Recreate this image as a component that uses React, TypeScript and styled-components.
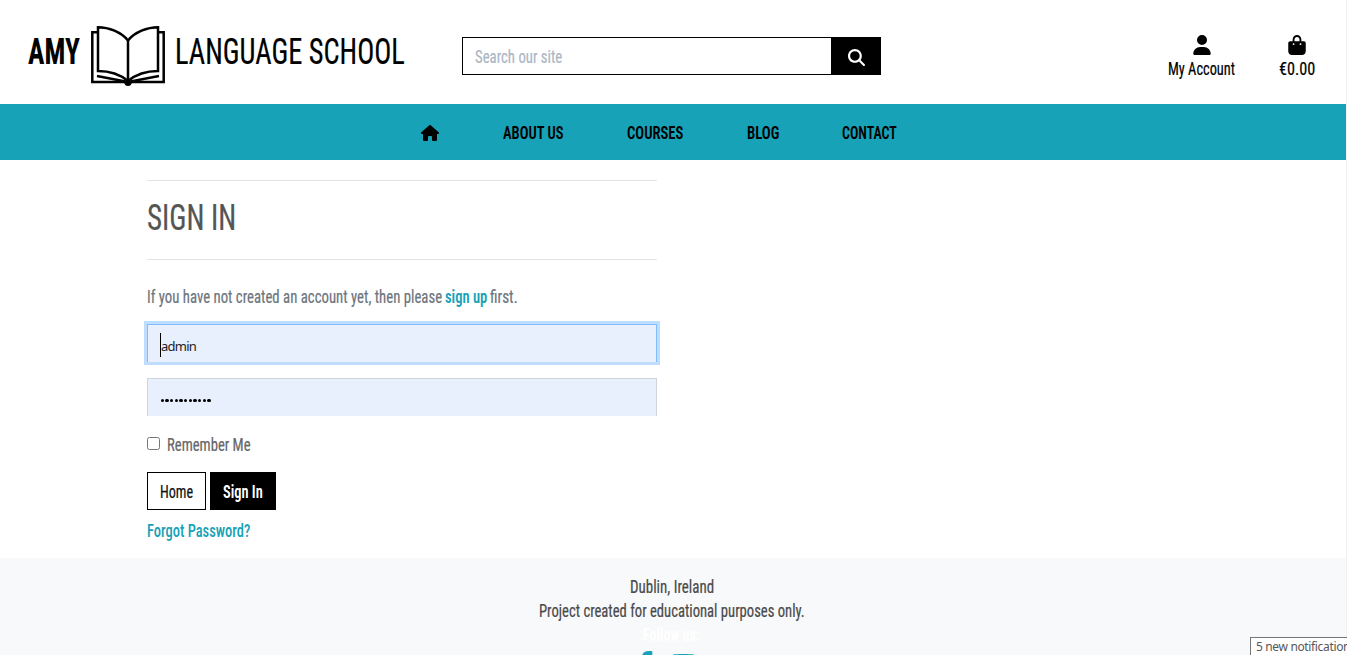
import React, { useLayoutEffect, useRef, useState } from "react";
import styled, { createGlobalStyle } from "styled-components";
import { FaUser, FaBagShopping, FaHouse, FaMagnifyingGlass, FaFacebookF, FaYoutube } from "react-icons/fa6";

const teal = "#17a2b8";

const GlobalStyle = createGlobalStyle`
  *, *::before, *::after { box-sizing: border-box; }
  html, body { margin: 0; padding: 0; overflow: hidden; background: #fff; }
  body { font-family: Roboto, "Liberation Sans", sans-serif; font-size: 18px; line-height: 24px; color: #555; }
  a { color: inherit; text-decoration: none; }
`;

/* Condensed lettering: text is squeezed horizontally to the given width. */
const TextBox = styled.span<{ $w: number; $size: number; $weight: number; $color?: string }>`
  display: inline-block;
  vertical-align: top;
  width: ${(p) => p.$w}px;
  height: ${(p) => (p.$size > 20 ? 48 : 24)}px;
  line-height: ${(p) => (p.$size > 20 ? 48 : 24)}px;
  font-size: ${(p) => p.$size}px;
  font-weight: ${(p) => p.$weight};
  font-stretch: 75%;
  -webkit-text-stroke: ${(p) => (p.$weight < 500 ? 0.2 : 0)}px currentColor;
  white-space: nowrap;
  color: ${(p) => p.$color || "inherit"};
`;
const Squeezed = styled.span`
  display: inline-block;
  transform-origin: 0 50%;
`;

type TextProps = { w: number; size?: number; weight?: number; color?: string; children: string };
function Text({ w, size = 18, weight = 450, color, children }: TextProps) {
  const ref = useRef<HTMLSpanElement>(null);
  const [scale, setScale] = useState(0.65);
  useLayoutEffect(() => {
    if (ref.current) setScale(w / ref.current.offsetWidth);
  }, [w, size, weight, children]);
  return (
    <TextBox $w={w} $size={size} $weight={weight} $color={color}>
      <Squeezed ref={ref} style={{ transform: `scaleX(${scale})` }}>{children}</Squeezed>
    </TextBox>
  );
}

const Page = styled.div`
  width: 1347px;
  height: 655px;
  overflow: hidden;
  border-right: 1px solid #f0f0f0;
  display: flex;
  flex-direction: column;
`;
const Header = styled.header`
  flex: none;
  height: 104px;
  display: flex;
  align-items: flex-start;
  color: #000;
`;
const Brand = styled.a`
  width: 462px;
  padding: 26px 0 0 28px;
  display: flex;
`;
const BookLogo = styled.svg`
  width: 74px;
  height: 61px;
  margin: 0 10px 0 11px;
  flex: none;
`;
const BrandWord = styled.span`
  padding-top: 2px;
`;
const Search = styled.form`
  display: flex;
  width: 419px;
  height: 38px;
  margin-top: 37px;
  border: 1px solid #000;
`;
const SearchField = styled.div`
  flex: 1;
  padding: 7px 12px;
`;
const SearchButton = styled.button`
  width: 49px;
  border: 0;
  padding: 2px 0 0 2px;
  background: #000;
  color: #fff;
  display: flex;
  align-items: center;
  justify-content: center;
`;
const Tools = styled.div`
  margin-left: auto;
  padding: 35px 31px 0 0;
  display: flex;
  gap: 44px;
`;
const Tool = styled.a`
  display: flex;
  flex-direction: column;
  align-items: center;
  gap: 2px;
  svg { display: block; }
`;
const Nav = styled.nav`
  flex: none;
  height: 56px;
  padding: 17px 0 0 421px;
  background: ${teal};
  color: #000;
  display: flex;
  gap: 63.7px;
`;
const HomeLink = styled.a`
  width: 18px;
  padding-top: 3px;
  svg { display: block; }
`;
const Main = styled.main`
  flex: none;
  width: 657px;
  height: 398px;
  padding: 20px 0 0 147px;
`;
const Title = styled.h1`
  height: 80px;
  margin: 0;
  padding-top: 13px;
  border-top: 1px solid #e3e3e3;
  border-bottom: 1px solid #e3e3e3;
`;
const Intro = styled.p`
  margin: 25px 0 15px;
  display: flex;
  gap: 3px;
  color: #6c757d;
`;
const Field = styled.div<{ $focused?: boolean }>`
  display: flex;
  align-items: center;
  height: 38px;
  padding: 0 12px;
  background: #e8effd;
  border: 1px solid ${(p) => (p.$focused ? "#80bdff" : "#ced4da")};
  border-bottom-width: 0;
  box-shadow: ${(p) => (p.$focused ? "0 0 0 3px #bfdeff" : "none")};
  margin-bottom: ${(p) => (p.$focused ? 16 : 17)}px;
`;
const Caret = styled.i`
  width: 1px;
  height: 24px;
  margin-top: 2px;
  background: #000;
`;
const Username = styled.span`
  padding-top: 4px;
  font: 13px/24px "Noto Sans", sans-serif;
  letter-spacing: -0.75px;
  color: #222;
`;
const Dots = styled.span`
  display: flex;
  gap: 1.3px;
  padding: 6px 0 0 0.5px;
`;
const Dot = styled.i`
  width: 3.4px;
  height: 3.4px;
  border-radius: 50%;
  background: #000;
`;
const Remember = styled.label`
  display: flex;
  gap: 7px;
  color: #666;
`;
const Checkbox = styled.input`
  width: 13px;
  height: 13px;
  margin: 4px 0 0;
`;
const Actions = styled.div`
  display: flex;
  gap: 4px;
  margin: 15px 0 9px;
`;
const Button = styled.button<{ $solid?: boolean }>`
  height: 38px;
  padding: 7px 12px;
  border: 1px solid #000;
  font: inherit;
  line-height: 24px;
  background: ${(p) => (p.$solid ? "#000" : "#fff")};
  color: ${(p) => (p.$solid ? "#fff" : "#111")};
`;
const Footer = styled.footer`
  flex: none;
  height: 120px;
  padding: 17px 3px 0 0;
  background: #f8f9fa;
  color: #4a4a4a;
  display: flex;
  flex-direction: column;
  align-items: center;
`;
const Social = styled.div`
  display: flex;
  gap: 16.5px;
  padding: 4px 8px 0 0;
  color: ${teal};
`;
const FacebookIcon = styled(FaFacebookF)`
  width: 15px;
  height: 24px;
`;
const YoutubeIcon = styled(FaYoutube)`
  width: 27px;
  height: 24px;
`;
const Notice = styled.div`
  position: absolute;
  left: 1250px;
  top: 637px;
  width: 97px;
  height: 18px;
  overflow: hidden;
  padding-left: 5px;
  background: #fff;
  border: solid #767676;
  border-width: 1px 0 0 1px;
  font: 12px/18px "Noto Sans", sans-serif;
  letter-spacing: -0.35px;
  white-space: nowrap;
  color: #575757;
`;

export default function App() {
  return (
    <>
      <GlobalStyle />
      <Page>
        <Header>
          <Brand href="#">
            <BrandWord><Text w={52} size={36.5} weight={700}>AMY</Text></BrandWord>
            <BookLogo viewBox="0 0 74 61" fill="none" stroke="#000" strokeWidth="2.5">
              <path d="M7 6.300H1.300V56H72.700V6.300H67" />
              <path d="M7 1.300C18 1.300 30 6 37 14.500C44 6 56 1.300 67 1.300V45C54 45 43 50 37 55C31 50 20 45 7 45Z" />
              <path d="M37 14V55M6 50L37 56L68 50" />
              <path d="M33 55.500H41C41 58 39.500 60 37 60S33 58 33 55.500Z" fill="#000" stroke="none" />
            </BookLogo>
            <BrandWord><Text w={229.5} size={36.5} weight={400}>LANGUAGE SCHOOL</Text></BrandWord>
          </Brand>
          <Search>
            <SearchField><Text w={87} color="#aab7c4">Search our site</Text></SearchField>
            <SearchButton type="button" aria-label="Search"><FaMagnifyingGlass size={17} /></SearchButton>
          </Search>
          <Tools>
            <Tool href="#"><FaUser size={20} /><Text w={67} weight={400}>My Account</Text></Tool>
            <Tool href="#"><FaBagShopping size={20} /><Text w={36} weight={400}>€0.00</Text></Tool>
          </Tools>
        </Header>
        <Nav>
          <HomeLink href="#" aria-label="Home"><FaHouse size={18} /></HomeLink>
          <Text w={60.5} weight={650}>ABOUT US</Text>
          <Text w={56} weight={650}>COURSES</Text>
          <Text w={32} weight={650}>BLOG</Text>
          <Text w={55} weight={650}>CONTACT</Text>
        </Nav>
        <Main>
          <Title><Text w={89} size={36.5} weight={400}>SIGN IN</Text></Title>
          <Intro>
            <Text w={295}>If you have not created an account yet, then please</Text>
            <a href="#"><Text w={42} weight={600} color={teal}>sign up</Text></a>
            <Text w={28}>first.</Text>
          </Intro>
          <Field $focused><Caret /><Username>admin</Username></Field>
          <Field><Dots>{Array.from({ length: 11 }, (_, i) => <Dot key={i} />)}</Dots></Field>
          <Remember><Checkbox type="checkbox" /><Text w={84}>Remember Me</Text></Remember>
          <Actions>
            <Button><Text w={33}>Home</Text></Button>
            <Button $solid><Text w={40} weight={650}>Sign In</Text></Button>
          </Actions>
          <a href="#"><Text w={103} weight={550} color={teal}>Forgot Password?</Text></a>
        </Main>
        <Footer>
          <Text w={84}>Dublin, Ireland</Text>
          <Text w={266}>Project created for educational purposes only.</Text>
          <Text w={57} weight={700} color="#fff">Follow us:</Text>
          <Social><FacebookIcon /><YoutubeIcon /></Social>
        </Footer>
        <Notice>5 new notifications</Notice>
      </Page>
    </>
  );
}
